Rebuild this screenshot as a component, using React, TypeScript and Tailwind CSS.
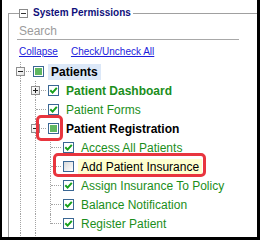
type CheckState = 'checked' | 'partial' | 'empty'

interface TreeRow {
  label: string
  level: number
  state: CheckState
  expander?: 'open' | 'closed'
  bold?: boolean
  tone: 'green' | 'black'
  highlight?: 'blue' | 'yellow'
  guides: boolean[]
  last?: boolean
}

const rows: TreeRow[] = [
  { label: 'Patients', level: 0, state: 'partial', expander: 'open', bold: true, tone: 'black', highlight: 'blue', guides: [] },
  { label: 'Patient Dashboard', level: 1, state: 'checked', expander: 'closed', bold: true, tone: 'green', guides: [true] },
  { label: 'Patient Forms', level: 1, state: 'checked', tone: 'green', guides: [true] },
  { label: 'Patient Registration', level: 1, state: 'partial', expander: 'open', bold: true, tone: 'black', guides: [true] },
  { label: 'Access All Patients', level: 2, state: 'checked', tone: 'green', guides: [true, true] },
  { label: 'Add Patient Insurance', level: 2, state: 'empty', tone: 'black', highlight: 'yellow', guides: [true, true] },
  { label: 'Assign Insurance To Policy', level: 2, state: 'checked', tone: 'green', guides: [true, true] },
  { label: 'Balance Notification', level: 2, state: 'checked', tone: 'green', guides: [true, true] },
  { label: 'Register Patient', level: 2, state: 'checked', tone: 'green', guides: [true, true], last: true },
  // next node sits under the bottom edge, only its box peeks out
  { label: '', level: 1, state: 'checked', tone: 'green', guides: [true] },
]

const dot = 'border-dotted border-[#a3a3a3]'

function Guide({ on }: { on: boolean }) {
  return (
    <div className="flex h-full w-[15px] shrink-0 pl-[7px]">
      {on && <div className={`h-full border-l ${dot}`} />}
    </div>
  )
}

function Expander({ open }: { open: boolean }) {
  return (
    <div className="col-start-1 col-end-5 row-start-1 row-end-4 ml-[3px] flex h-[9px] w-[9px] items-center justify-center self-center justify-self-start border border-[#8f8f8f] bg-gradient-to-br from-white to-[#e4e4e4]">
      <div className="grid h-[5px] w-[5px] place-items-center">
        <div className="col-start-1 row-start-1 h-px w-[5px] bg-[#222]" />
        {!open && <div className="col-start-1 row-start-1 h-[5px] w-px bg-[#222]" />}
      </div>
    </div>
  )
}

function Branch({ last, expander }: { last?: boolean; expander?: 'open' | 'closed' }) {
  return (
    <div className="grid h-full w-[20px] shrink-0 grid-cols-[7px_1px_10px_2px] grid-rows-[9px_1px_9px]">
      <div className={`col-start-2 row-start-1 ${last ? 'row-end-3' : 'row-end-4'} border-l ${dot}`} />
      <div className={`col-start-3 row-start-2 border-t ${dot}`} />
      {expander && <Expander open={expander === 'open'} />}
    </div>
  )
}

function Box({ state }: { state: CheckState }) {
  return (
    <span
      className={`flex h-[11px] w-[11px] shrink-0 items-center justify-center border border-[#3a6794] ${
        state === 'empty' ? 'bg-gradient-to-br from-[#d9d9d9] to-white' : 'bg-white'
      }`}
    >
      {state === 'partial' && <span className="h-[7px] w-[7px] bg-[#5fb760]" />}
      {state === 'checked' && (
        <svg width="9" height="9" viewBox="0 0 9 9">
          <path d="M1.3 4.3 L3.6 6.6 L7.8 1.9" fill="none" stroke="#17a01c" strokeWidth="2" />
        </svg>
      )}
    </span>
  )
}

function Row({ row }: { row: TreeRow }) {
  const color = row.tone === 'green' ? 'text-[#1b8e1b]' : 'text-black'
  const bg =
    row.highlight === 'blue' ? 'bg-[#dce8f8]' : row.highlight === 'yellow' ? 'bg-[#ffffcf]' : ''
  return (
    <div className="flex h-[19px] items-center">
      {row.guides.map((on, i) => (
        <Guide key={i} on={on} />
      ))}
      <Branch last={row.last} expander={row.expander} />
      <Box state={row.state} />
      {row.label && (
        <span
          className={`ml-[4px] whitespace-nowrap px-[3px] text-[12px] leading-[16px] ${color} ${bg} ${
            row.bold ? 'font-bold' : ''
          }`}
        >
          {row.label}
        </span>
      )}
    </div>
  )
}

export default function App() {
  return (
    <div className="h-[240px] w-[260px] overflow-hidden bg-white font-['Liberation_Sans',Arial,sans-serif]">
      <div className="relative flex h-full w-full flex-col overflow-hidden border-b-[3px] border-l-2 border-r-[3px] border-black pl-[6px]">
        {/* legend */}
        <div className="mt-[7px] flex h-[12px] shrink-0 items-center">
          <div className="h-[6px] w-[11px] self-end border-l border-t border-[#a0a0a0]" />
          <div className="flex h-[9px] w-[9px] items-center justify-center border border-[#8a8a8a] bg-white">
            <div className="h-px w-[5px] bg-[#333]" />
          </div>
          <span className="ml-[5px] whitespace-nowrap text-[10px] font-bold leading-[12px] text-[#10107a]">
            System Permissions
          </span>
          <div className="ml-[2px] h-[6px] flex-1 self-end border-t border-[#a0a0a0]" />
        </div>

        <div className="flex flex-1 flex-col border-l border-[#a0a0a0]">
          <input
            placeholder="Search"
            className="ml-[8px] h-[21px] w-[222px] border-b border-[#a8a8a8] pl-[2px] pt-[3px] text-[12px] outline-none placeholder:text-[#9c9c9c]"
          />
          <div className="ml-[10px] mt-[6px] flex text-[10px] leading-[12px] text-[#1c1cdc]">
            <a className="underline">Collapse</a>
            <a className="ml-[13px] underline">Check/Uncheck All</a>
          </div>
          <div className="ml-[4px] mt-[4px] flex flex-col">
            {rows.map((row, i) => (
              <Row key={i} row={row} />
            ))}
          </div>
        </div>

        {/* annotation marks */}
        <div className="absolute left-[34px] top-[115px] h-[26px] w-[27px] rounded-[5px] border-[3px] border-[#e8353e]" />
        <div className="absolute left-[51px] top-[153px] h-[24px] w-[153px] rounded-[5px] border-[3px] border-[#e8353e]" />
      </div>
    </div>
  )
}
